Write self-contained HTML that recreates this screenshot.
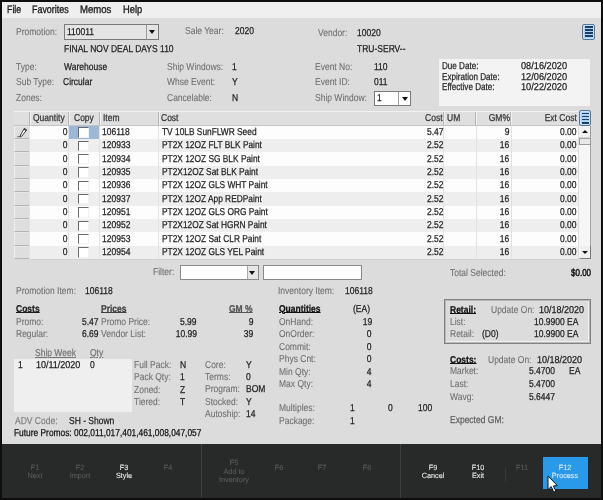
<!DOCTYPE html>
<html><head><meta charset="utf-8"><style>
html,body{margin:0;padding:0;width:603px;height:500px;overflow:hidden;background:#0e0e0e}
.b{position:absolute}
.t{position:absolute;font-family:"Liberation Sans",sans-serif;font-size:10px;line-height:10px;white-space:pre;text-rendering:geometricPrecision;-webkit-text-stroke-width:0.25px}
#tx{position:absolute;left:0;top:0;width:603px;height:500px;will-change:transform}
</style></head><body>
<div class="b" style="left:0px;top:0px;width:603px;height:500px;background:#0e0e0e"></div>
<div class="b" style="left:2px;top:2px;width:598.5px;height:495.8px;background:#dcdcdc"></div>
<div class="b" style="left:2px;top:2px;width:598.5px;height:15.5px;background:#efefef"></div>
<div class="b" style="left:582px;top:24px;width:13px;height:16px;background:#acd3f6;border:1px solid #56779c;border-radius:2px;box-sizing:border-box;box-shadow:inset 0 0 0 1px #c6e2fb"></div>
<div class="b" style="left:584.5px;top:26.150000000000002px;width:8.0px;height:1.7999999999999972px;background:#1d3f66"></div>
<div class="b" style="left:584.5px;top:29.25px;width:8.0px;height:1.7999999999999972px;background:#1d3f66"></div>
<div class="b" style="left:584.5px;top:32.35px;width:8.0px;height:1.7999999999999972px;background:#1d3f66"></div>
<div class="b" style="left:584.5px;top:35.45px;width:8.0px;height:1.7999999999999972px;background:#1d3f66"></div>
<div class="b" style="left:64px;top:24px;width:95px;height:15.5px;border:1px solid #7a7a7a;background:#e4e4e4;box-sizing:border-box"></div>
<div class="b" style="left:145.5px;top:25px;width:1.0px;height:13.5px;background:#9a9a9a"></div>
<div class="b" style="left:149px;top:30px;width:0;height:0;border-left:3.5px solid transparent;border-right:3.5px solid transparent;border-top:4px solid #111"></div>
<div class="b" style="left:373.7px;top:90.6px;width:37.80000000000001px;height:15.400000000000006px;border:1px solid #7a7a7a;background:#fff;box-sizing:border-box"></div>
<div class="b" style="left:398px;top:91.6px;width:1px;height:13.400000000000006px;background:#a0a0a0"></div>
<div class="b" style="left:401.5px;top:97px;width:0;height:0;border-left:3.5px solid transparent;border-right:3.5px solid transparent;border-top:4px solid #111"></div>
<div class="b" style="left:438.5px;top:58.6px;width:151.5px;height:46.99999999999999px;background:#f3f3f3"></div>
<div class="b" style="left:14px;top:110.7px;width:564.5px;height:15.0px;background:#dfdfdf;border-top:1px solid #f2f2f2;box-sizing:border-box"></div>
<div class="b" style="left:28.7px;top:111.7px;width:1.0px;height:14.0px;background:#b4b4b4"></div>
<div class="b" style="left:29.7px;top:111.7px;width:1.0px;height:14.0px;background:#f2f2f2"></div>
<div class="b" style="left:67.7px;top:111.7px;width:1.0px;height:14.0px;background:#b4b4b4"></div>
<div class="b" style="left:68.7px;top:111.7px;width:1.0px;height:14.0px;background:#f2f2f2"></div>
<div class="b" style="left:98.5px;top:111.7px;width:1.0px;height:14.0px;background:#b4b4b4"></div>
<div class="b" style="left:99.5px;top:111.7px;width:1.0px;height:14.0px;background:#f2f2f2"></div>
<div class="b" style="left:157.7px;top:111.7px;width:1.0px;height:14.0px;background:#b4b4b4"></div>
<div class="b" style="left:158.7px;top:111.7px;width:1.0px;height:14.0px;background:#f2f2f2"></div>
<div class="b" style="left:442.7px;top:111.7px;width:1.0px;height:14.0px;background:#b4b4b4"></div>
<div class="b" style="left:443.7px;top:111.7px;width:1.0px;height:14.0px;background:#f2f2f2"></div>
<div class="b" style="left:475.2px;top:111.7px;width:1.0px;height:14.0px;background:#b4b4b4"></div>
<div class="b" style="left:476.2px;top:111.7px;width:1.0px;height:14.0px;background:#f2f2f2"></div>
<div class="b" style="left:510px;top:111.7px;width:1px;height:14.0px;background:#b4b4b4"></div>
<div class="b" style="left:511px;top:111.7px;width:1px;height:14.0px;background:#f2f2f2"></div>
<div class="b" style="left:14px;top:124.7px;width:564.5px;height:1.0px;background:#c4c4c4"></div>
<div class="b" style="left:579px;top:110px;width:12px;height:16px;background:#acd3f6;border:1px solid #56779c;border-radius:2px;box-sizing:border-box;box-shadow:inset 0 0 0 1px #c6e2fb"></div>
<div class="b" style="left:581.5px;top:112.55px;width:7.0px;height:1.8000000000000114px;background:#1d3f66"></div>
<div class="b" style="left:581.5px;top:115.55px;width:7.0px;height:1.8000000000000114px;background:#1d3f66"></div>
<div class="b" style="left:581.5px;top:118.64999999999999px;width:7.0px;height:1.8000000000000114px;background:#1d3f66"></div>
<div class="b" style="left:581.5px;top:121.75px;width:7.0px;height:1.8000000000000114px;background:#1d3f66"></div>
<div class="b" style="left:29.7px;top:125.7px;width:548.8px;height:13.329999999999998px;background:#fdfdfd"></div>
<div class="b" style="left:14px;top:125.7px;width:15.7px;height:13.329999999999998px;background:#dedede;border-left:1px solid #f0f0f0;border-top:1px solid #e8e8e8;border-right:1px solid #bcbcbc;border-bottom:1px solid #b4b4b4;box-sizing:border-box"></div>
<div class="b" style="left:29.2px;top:125.7px;width:1.0px;height:13.329999999999998px;background:#e2e2e2"></div>
<div class="b" style="left:68.2px;top:125.7px;width:1.0px;height:13.329999999999998px;background:#e2e2e2"></div>
<div class="b" style="left:99.0px;top:125.7px;width:1.0px;height:13.329999999999998px;background:#e2e2e2"></div>
<div class="b" style="left:158.2px;top:125.7px;width:1.0px;height:13.329999999999998px;background:#e2e2e2"></div>
<div class="b" style="left:443.2px;top:125.7px;width:1.0px;height:13.329999999999998px;background:#e2e2e2"></div>
<div class="b" style="left:475.7px;top:125.7px;width:1.0px;height:13.329999999999998px;background:#e2e2e2"></div>
<div class="b" style="left:510.5px;top:125.7px;width:1.0px;height:13.329999999999998px;background:#e2e2e2"></div>
<div class="b" style="left:69.2px;top:125.7px;width:29.799999999999997px;height:12.829999999999998px;background:#9db7d6"></div>
<div class="b" style="left:78.2px;top:127.2px;width:11.0px;height:10.499999999999986px;background:#fff;border-left:1.5px solid #6a6a6a;border-top:1.5px solid #6a6a6a;border-right:1px solid #f2f2f2;border-bottom:1px solid #f2f2f2;box-sizing:border-box"></div>
<div class="b" style="left:29.7px;top:139.03px;width:548.8px;height:13.330000000000013px;background:#eeeeee"></div>
<div class="b" style="left:14px;top:139.03px;width:15.7px;height:13.330000000000013px;background:#dedede;border-left:1px solid #f0f0f0;border-top:1px solid #e8e8e8;border-right:1px solid #bcbcbc;border-bottom:1px solid #b4b4b4;box-sizing:border-box"></div>
<div class="b" style="left:29.2px;top:139.03px;width:1.0px;height:13.330000000000013px;background:#e2e2e2"></div>
<div class="b" style="left:68.2px;top:139.03px;width:1.0px;height:13.330000000000013px;background:#e2e2e2"></div>
<div class="b" style="left:99.0px;top:139.03px;width:1.0px;height:13.330000000000013px;background:#e2e2e2"></div>
<div class="b" style="left:158.2px;top:139.03px;width:1.0px;height:13.330000000000013px;background:#e2e2e2"></div>
<div class="b" style="left:443.2px;top:139.03px;width:1.0px;height:13.330000000000013px;background:#e2e2e2"></div>
<div class="b" style="left:475.7px;top:139.03px;width:1.0px;height:13.330000000000013px;background:#e2e2e2"></div>
<div class="b" style="left:510.5px;top:139.03px;width:1.0px;height:13.330000000000013px;background:#e2e2e2"></div>
<div class="b" style="left:78.2px;top:140.53px;width:11.0px;height:10.5px;background:#fff;border-left:1.5px solid #6a6a6a;border-top:1.5px solid #6a6a6a;border-right:1px solid #f2f2f2;border-bottom:1px solid #f2f2f2;box-sizing:border-box"></div>
<div class="b" style="left:29.7px;top:152.36px;width:548.8px;height:13.330000000000013px;background:#fdfdfd"></div>
<div class="b" style="left:14px;top:152.36px;width:15.7px;height:13.330000000000013px;background:#dedede;border-left:1px solid #f0f0f0;border-top:1px solid #e8e8e8;border-right:1px solid #bcbcbc;border-bottom:1px solid #b4b4b4;box-sizing:border-box"></div>
<div class="b" style="left:29.2px;top:152.36px;width:1.0px;height:13.330000000000013px;background:#e2e2e2"></div>
<div class="b" style="left:68.2px;top:152.36px;width:1.0px;height:13.330000000000013px;background:#e2e2e2"></div>
<div class="b" style="left:99.0px;top:152.36px;width:1.0px;height:13.330000000000013px;background:#e2e2e2"></div>
<div class="b" style="left:158.2px;top:152.36px;width:1.0px;height:13.330000000000013px;background:#e2e2e2"></div>
<div class="b" style="left:443.2px;top:152.36px;width:1.0px;height:13.330000000000013px;background:#e2e2e2"></div>
<div class="b" style="left:475.7px;top:152.36px;width:1.0px;height:13.330000000000013px;background:#e2e2e2"></div>
<div class="b" style="left:510.5px;top:152.36px;width:1.0px;height:13.330000000000013px;background:#e2e2e2"></div>
<div class="b" style="left:78.2px;top:153.86px;width:11.0px;height:10.5px;background:#fff;border-left:1.5px solid #6a6a6a;border-top:1.5px solid #6a6a6a;border-right:1px solid #f2f2f2;border-bottom:1px solid #f2f2f2;box-sizing:border-box"></div>
<div class="b" style="left:29.7px;top:165.69px;width:548.8px;height:13.330000000000013px;background:#eeeeee"></div>
<div class="b" style="left:14px;top:165.69px;width:15.7px;height:13.330000000000013px;background:#dedede;border-left:1px solid #f0f0f0;border-top:1px solid #e8e8e8;border-right:1px solid #bcbcbc;border-bottom:1px solid #b4b4b4;box-sizing:border-box"></div>
<div class="b" style="left:29.2px;top:165.69px;width:1.0px;height:13.330000000000013px;background:#e2e2e2"></div>
<div class="b" style="left:68.2px;top:165.69px;width:1.0px;height:13.330000000000013px;background:#e2e2e2"></div>
<div class="b" style="left:99.0px;top:165.69px;width:1.0px;height:13.330000000000013px;background:#e2e2e2"></div>
<div class="b" style="left:158.2px;top:165.69px;width:1.0px;height:13.330000000000013px;background:#e2e2e2"></div>
<div class="b" style="left:443.2px;top:165.69px;width:1.0px;height:13.330000000000013px;background:#e2e2e2"></div>
<div class="b" style="left:475.7px;top:165.69px;width:1.0px;height:13.330000000000013px;background:#e2e2e2"></div>
<div class="b" style="left:510.5px;top:165.69px;width:1.0px;height:13.330000000000013px;background:#e2e2e2"></div>
<div class="b" style="left:78.2px;top:167.19px;width:11.0px;height:10.5px;background:#fff;border-left:1.5px solid #6a6a6a;border-top:1.5px solid #6a6a6a;border-right:1px solid #f2f2f2;border-bottom:1px solid #f2f2f2;box-sizing:border-box"></div>
<div class="b" style="left:29.7px;top:179.02px;width:548.8px;height:13.330000000000013px;background:#fdfdfd"></div>
<div class="b" style="left:14px;top:179.02px;width:15.7px;height:13.330000000000013px;background:#dedede;border-left:1px solid #f0f0f0;border-top:1px solid #e8e8e8;border-right:1px solid #bcbcbc;border-bottom:1px solid #b4b4b4;box-sizing:border-box"></div>
<div class="b" style="left:29.2px;top:179.02px;width:1.0px;height:13.330000000000013px;background:#e2e2e2"></div>
<div class="b" style="left:68.2px;top:179.02px;width:1.0px;height:13.330000000000013px;background:#e2e2e2"></div>
<div class="b" style="left:99.0px;top:179.02px;width:1.0px;height:13.330000000000013px;background:#e2e2e2"></div>
<div class="b" style="left:158.2px;top:179.02px;width:1.0px;height:13.330000000000013px;background:#e2e2e2"></div>
<div class="b" style="left:443.2px;top:179.02px;width:1.0px;height:13.330000000000013px;background:#e2e2e2"></div>
<div class="b" style="left:475.7px;top:179.02px;width:1.0px;height:13.330000000000013px;background:#e2e2e2"></div>
<div class="b" style="left:510.5px;top:179.02px;width:1.0px;height:13.330000000000013px;background:#e2e2e2"></div>
<div class="b" style="left:78.2px;top:180.52px;width:11.0px;height:10.5px;background:#fff;border-left:1.5px solid #6a6a6a;border-top:1.5px solid #6a6a6a;border-right:1px solid #f2f2f2;border-bottom:1px solid #f2f2f2;box-sizing:border-box"></div>
<div class="b" style="left:29.7px;top:192.35000000000002px;width:548.8px;height:13.330000000000013px;background:#eeeeee"></div>
<div class="b" style="left:14px;top:192.35000000000002px;width:15.7px;height:13.330000000000013px;background:#dedede;border-left:1px solid #f0f0f0;border-top:1px solid #e8e8e8;border-right:1px solid #bcbcbc;border-bottom:1px solid #b4b4b4;box-sizing:border-box"></div>
<div class="b" style="left:29.2px;top:192.35000000000002px;width:1.0px;height:13.330000000000013px;background:#e2e2e2"></div>
<div class="b" style="left:68.2px;top:192.35000000000002px;width:1.0px;height:13.330000000000013px;background:#e2e2e2"></div>
<div class="b" style="left:99.0px;top:192.35000000000002px;width:1.0px;height:13.330000000000013px;background:#e2e2e2"></div>
<div class="b" style="left:158.2px;top:192.35000000000002px;width:1.0px;height:13.330000000000013px;background:#e2e2e2"></div>
<div class="b" style="left:443.2px;top:192.35000000000002px;width:1.0px;height:13.330000000000013px;background:#e2e2e2"></div>
<div class="b" style="left:475.7px;top:192.35000000000002px;width:1.0px;height:13.330000000000013px;background:#e2e2e2"></div>
<div class="b" style="left:510.5px;top:192.35000000000002px;width:1.0px;height:13.330000000000013px;background:#e2e2e2"></div>
<div class="b" style="left:78.2px;top:193.85000000000002px;width:11.0px;height:10.5px;background:#fff;border-left:1.5px solid #6a6a6a;border-top:1.5px solid #6a6a6a;border-right:1px solid #f2f2f2;border-bottom:1px solid #f2f2f2;box-sizing:border-box"></div>
<div class="b" style="left:29.7px;top:205.68px;width:548.8px;height:13.330000000000013px;background:#fdfdfd"></div>
<div class="b" style="left:14px;top:205.68px;width:15.7px;height:13.330000000000013px;background:#dedede;border-left:1px solid #f0f0f0;border-top:1px solid #e8e8e8;border-right:1px solid #bcbcbc;border-bottom:1px solid #b4b4b4;box-sizing:border-box"></div>
<div class="b" style="left:29.2px;top:205.68px;width:1.0px;height:13.330000000000013px;background:#e2e2e2"></div>
<div class="b" style="left:68.2px;top:205.68px;width:1.0px;height:13.330000000000013px;background:#e2e2e2"></div>
<div class="b" style="left:99.0px;top:205.68px;width:1.0px;height:13.330000000000013px;background:#e2e2e2"></div>
<div class="b" style="left:158.2px;top:205.68px;width:1.0px;height:13.330000000000013px;background:#e2e2e2"></div>
<div class="b" style="left:443.2px;top:205.68px;width:1.0px;height:13.330000000000013px;background:#e2e2e2"></div>
<div class="b" style="left:475.7px;top:205.68px;width:1.0px;height:13.330000000000013px;background:#e2e2e2"></div>
<div class="b" style="left:510.5px;top:205.68px;width:1.0px;height:13.330000000000013px;background:#e2e2e2"></div>
<div class="b" style="left:78.2px;top:207.18px;width:11.0px;height:10.5px;background:#fff;border-left:1.5px solid #6a6a6a;border-top:1.5px solid #6a6a6a;border-right:1px solid #f2f2f2;border-bottom:1px solid #f2f2f2;box-sizing:border-box"></div>
<div class="b" style="left:29.7px;top:219.01px;width:548.8px;height:13.330000000000013px;background:#eeeeee"></div>
<div class="b" style="left:14px;top:219.01px;width:15.7px;height:13.330000000000013px;background:#dedede;border-left:1px solid #f0f0f0;border-top:1px solid #e8e8e8;border-right:1px solid #bcbcbc;border-bottom:1px solid #b4b4b4;box-sizing:border-box"></div>
<div class="b" style="left:29.2px;top:219.01px;width:1.0px;height:13.330000000000013px;background:#e2e2e2"></div>
<div class="b" style="left:68.2px;top:219.01px;width:1.0px;height:13.330000000000013px;background:#e2e2e2"></div>
<div class="b" style="left:99.0px;top:219.01px;width:1.0px;height:13.330000000000013px;background:#e2e2e2"></div>
<div class="b" style="left:158.2px;top:219.01px;width:1.0px;height:13.330000000000013px;background:#e2e2e2"></div>
<div class="b" style="left:443.2px;top:219.01px;width:1.0px;height:13.330000000000013px;background:#e2e2e2"></div>
<div class="b" style="left:475.7px;top:219.01px;width:1.0px;height:13.330000000000013px;background:#e2e2e2"></div>
<div class="b" style="left:510.5px;top:219.01px;width:1.0px;height:13.330000000000013px;background:#e2e2e2"></div>
<div class="b" style="left:78.2px;top:220.51px;width:11.0px;height:10.5px;background:#fff;border-left:1.5px solid #6a6a6a;border-top:1.5px solid #6a6a6a;border-right:1px solid #f2f2f2;border-bottom:1px solid #f2f2f2;box-sizing:border-box"></div>
<div class="b" style="left:29.7px;top:232.34px;width:548.8px;height:13.330000000000013px;background:#fdfdfd"></div>
<div class="b" style="left:14px;top:232.34px;width:15.7px;height:13.330000000000013px;background:#dedede;border-left:1px solid #f0f0f0;border-top:1px solid #e8e8e8;border-right:1px solid #bcbcbc;border-bottom:1px solid #b4b4b4;box-sizing:border-box"></div>
<div class="b" style="left:29.2px;top:232.34px;width:1.0px;height:13.330000000000013px;background:#e2e2e2"></div>
<div class="b" style="left:68.2px;top:232.34px;width:1.0px;height:13.330000000000013px;background:#e2e2e2"></div>
<div class="b" style="left:99.0px;top:232.34px;width:1.0px;height:13.330000000000013px;background:#e2e2e2"></div>
<div class="b" style="left:158.2px;top:232.34px;width:1.0px;height:13.330000000000013px;background:#e2e2e2"></div>
<div class="b" style="left:443.2px;top:232.34px;width:1.0px;height:13.330000000000013px;background:#e2e2e2"></div>
<div class="b" style="left:475.7px;top:232.34px;width:1.0px;height:13.330000000000013px;background:#e2e2e2"></div>
<div class="b" style="left:510.5px;top:232.34px;width:1.0px;height:13.330000000000013px;background:#e2e2e2"></div>
<div class="b" style="left:78.2px;top:233.84px;width:11.0px;height:10.5px;background:#fff;border-left:1.5px solid #6a6a6a;border-top:1.5px solid #6a6a6a;border-right:1px solid #f2f2f2;border-bottom:1px solid #f2f2f2;box-sizing:border-box"></div>
<div class="b" style="left:29.7px;top:245.67000000000002px;width:548.8px;height:13.329999999999984px;background:#eeeeee"></div>
<div class="b" style="left:14px;top:245.67000000000002px;width:15.7px;height:13.329999999999984px;background:#dedede;border-left:1px solid #f0f0f0;border-top:1px solid #e8e8e8;border-right:1px solid #bcbcbc;border-bottom:1px solid #b4b4b4;box-sizing:border-box"></div>
<div class="b" style="left:29.2px;top:245.67000000000002px;width:1.0px;height:13.329999999999984px;background:#e2e2e2"></div>
<div class="b" style="left:68.2px;top:245.67000000000002px;width:1.0px;height:13.329999999999984px;background:#e2e2e2"></div>
<div class="b" style="left:99.0px;top:245.67000000000002px;width:1.0px;height:13.329999999999984px;background:#e2e2e2"></div>
<div class="b" style="left:158.2px;top:245.67000000000002px;width:1.0px;height:13.329999999999984px;background:#e2e2e2"></div>
<div class="b" style="left:443.2px;top:245.67000000000002px;width:1.0px;height:13.329999999999984px;background:#e2e2e2"></div>
<div class="b" style="left:475.7px;top:245.67000000000002px;width:1.0px;height:13.329999999999984px;background:#e2e2e2"></div>
<div class="b" style="left:510.5px;top:245.67000000000002px;width:1.0px;height:13.329999999999984px;background:#e2e2e2"></div>
<div class="b" style="left:78.2px;top:247.17000000000002px;width:11.0px;height:10.5px;background:#fff;border-left:1.5px solid #6a6a6a;border-top:1.5px solid #6a6a6a;border-right:1px solid #f2f2f2;border-bottom:1px solid #f2f2f2;box-sizing:border-box"></div>
<div class="b" style="left:29.7px;top:258.5px;width:548.8px;height:1.0px;background:#d0d0d0"></div>
<svg class="b" style="left:14px;top:125px" width="16" height="14" viewBox="0 0 16 14"><path d="M10.3 3.4 L12.7 5.0 L7.8 11.2 L6.3 11.8 L6.5 10.0 Z" fill="#f4f4f4" stroke="#2a2a2a" stroke-width="0.9" stroke-linejoin="round"/><path d="M10.3 3.4 L12.7 5.0 L11.9 6.0 L9.5 4.4Z" fill="#3a3a3a"/><path d="M3.3 11.7 L6.5 11.7" stroke="#555" stroke-width="0.9"/></svg>
<div class="b" style="left:578.5px;top:125.7px;width:12.5px;height:133.3px;background:#f6f6f6;border-right:1px solid #a4a4a4;box-sizing:border-box"></div>
<div class="b" style="left:578.5px;top:125.7px;width:12.5px;height:12.700000000000003px;background:#f2f2f2;border-right:1px solid #9a9a9a;border-bottom:1px solid #d0d0d0;box-sizing:border-box"></div>
<div class="b" style="left:581.8px;top:130px;width:0;height:0;border-left:3.5px solid transparent;border-right:3.5px solid transparent;border-bottom:3.5px solid #111"></div>
<div class="b" style="left:578.5px;top:138.4px;width:12.5px;height:7.099999999999994px;background:#e8e8e8;border:1px solid #9a9a9a;border-top:1px solid #a8a8a8;box-sizing:border-box"></div>
<div class="b" style="left:578.5px;top:245.7px;width:12.799999999999955px;height:13.5px;background:#f0f0f0;border-left:1px solid #fafafa;border-right:1.5px solid #7a7a7a;border-bottom:1.5px solid #7a7a7a;box-sizing:border-box"></div>
<div class="b" style="left:581.8px;top:251px;width:0;height:0;border-left:3.5px solid transparent;border-right:3.5px solid transparent;border-top:3.5px solid #111"></div>
<div class="b" style="left:180px;top:264.5px;width:79px;height:15.5px;border:1px solid #8a8a8a;background:#fff;box-sizing:border-box"></div>
<div class="b" style="left:247px;top:265.5px;width:11px;height:13.5px;background:#e6e6e6;border-left:1px solid #a8a8a8;box-sizing:border-box"></div>
<div class="b" style="left:249px;top:270.5px;width:0;height:0;border-left:3.5px solid transparent;border-right:3.5px solid transparent;border-top:4px solid #111"></div>
<div class="b" style="left:263.2px;top:264.5px;width:98.80000000000001px;height:15.5px;border:1px solid #8a8a8a;background:#fff;box-sizing:border-box"></div>
<div class="b" style="left:444px;top:299.3px;width:147px;height:45.0px;border:1px solid #828282;box-shadow:inset 0 0 0 1px #b8b8b8, inset -2px -2px 0 #f0f0f0;box-sizing:border-box"></div>
<div class="b" style="left:14.4px;top:358.9px;width:117.4px;height:53.5px;background:#efefef"></div>
<div class="b" style="left:2px;top:444px;width:598.5px;height:53.80000000000001px;background:#282a29"></div>
<div class="b" style="left:200.5px;top:444px;width:1.0px;height:53.80000000000001px;background:#3e403f"></div>
<div class="b" style="left:399.5px;top:444px;width:1.0px;height:53.80000000000001px;background:#3e403f"></div>
<div class="b" style="left:542.7px;top:456.5px;width:45.5px;height:32.0px;background:#299aea"></div>
<div class="b" style="left:505px;top:468px;width:1px;height:13px;background:#3a3c3b"></div>
<div id="tx">
<div class="t" style="top:5.00px;color:#1c1c1c;font-size:11px;left:6.70px;transform:scaleX(0.8);transform-origin:0 0;-webkit-text-stroke-width:0.35px;">File</div>
<div class="t" style="top:5.00px;color:#1c1c1c;font-size:11px;left:32.00px;transform:scaleX(0.81);transform-origin:0 0;-webkit-text-stroke-width:0.35px;">Favorites</div>
<div class="t" style="top:5.00px;color:#1c1c1c;font-size:11px;left:79.70px;transform:scaleX(0.87);transform-origin:0 0;-webkit-text-stroke-width:0.35px;">Memos</div>
<div class="t" style="top:5.00px;color:#1c1c1c;font-size:11px;left:122.70px;transform:scaleX(0.85);transform-origin:0 0;-webkit-text-stroke-width:0.35px;">Help</div>
<div class="t" style="top:28.00px;color:#707070;left:15.70px;transform:scaleX(0.85);transform-origin:0 0;-webkit-text-stroke-width:0.1px;">Promotion:</div>
<div class="t" style="top:28.00px;color:#222;left:66.70px;transform:scaleX(0.85);transform-origin:0 0;">110011</div>
<div class="t" style="top:45.00px;color:#222;left:64.20px;transform:scaleX(0.85);transform-origin:0 0;">FINAL NOV DEAL DAYS 110</div>
<div class="t" style="top:63.00px;color:#707070;left:15.70px;transform:scaleX(0.85);transform-origin:0 0;-webkit-text-stroke-width:0.1px;">Type:</div>
<div class="t" style="top:63.00px;color:#222;left:63.70px;transform:scaleX(0.85);transform-origin:0 0;">Warehouse</div>
<div class="t" style="top:78.00px;color:#707070;left:15.70px;transform:scaleX(0.85);transform-origin:0 0;-webkit-text-stroke-width:0.1px;">Sub Type:</div>
<div class="t" style="top:78.00px;color:#222;left:63.20px;transform:scaleX(0.85);transform-origin:0 0;">Circular</div>
<div class="t" style="top:94.00px;color:#707070;left:15.70px;transform:scaleX(0.85);transform-origin:0 0;-webkit-text-stroke-width:0.1px;">Zones:</div>
<div class="t" style="top:27.00px;color:#707070;left:185.00px;transform:scaleX(0.85);transform-origin:0 0;-webkit-text-stroke-width:0.1px;">Sale Year:</div>
<div class="t" style="top:27.00px;color:#222;left:235.30px;transform:scaleX(0.85);transform-origin:0 0;">2020</div>
<div class="t" style="top:63.00px;color:#707070;left:167.10px;transform:scaleX(0.85);transform-origin:0 0;-webkit-text-stroke-width:0.1px;">Ship Windows:</div>
<div class="t" style="top:63.00px;color:#222;left:232.30px;transform:scaleX(0.85);transform-origin:0 0;">1</div>
<div class="t" style="top:78.00px;color:#707070;left:167.10px;transform:scaleX(0.85);transform-origin:0 0;-webkit-text-stroke-width:0.1px;">Whse Event:</div>
<div class="t" style="top:78.00px;color:#222;left:231.90px;transform:scaleX(0.85);transform-origin:0 0;">Y</div>
<div class="t" style="top:94.00px;color:#707070;left:167.10px;transform:scaleX(0.85);transform-origin:0 0;-webkit-text-stroke-width:0.1px;">Cancelable:</div>
<div class="t" style="top:94.00px;color:#222;left:232.30px;transform:scaleX(0.85);transform-origin:0 0;">N</div>
<div class="t" style="top:29.00px;color:#707070;left:317.60px;transform:scaleX(0.85);transform-origin:0 0;-webkit-text-stroke-width:0.1px;">Vendor:</div>
<div class="t" style="top:29.00px;color:#222;left:357.40px;transform:scaleX(0.85);transform-origin:0 0;">10020</div>
<div class="t" style="top:45.00px;color:#222;left:357.40px;transform:scaleX(0.85);transform-origin:0 0;">TRU-SERV--</div>
<div class="t" style="top:63.00px;color:#707070;left:315.00px;transform:scaleX(0.85);transform-origin:0 0;-webkit-text-stroke-width:0.1px;">Event No:</div>
<div class="t" style="top:63.00px;color:#222;left:374.00px;transform:scaleX(0.85);transform-origin:0 0;">110</div>
<div class="t" style="top:78.00px;color:#707070;left:315.00px;transform:scaleX(0.85);transform-origin:0 0;-webkit-text-stroke-width:0.1px;">Event ID:</div>
<div class="t" style="top:78.00px;color:#222;left:374.00px;transform:scaleX(0.85);transform-origin:0 0;">011</div>
<div class="t" style="top:94.00px;color:#707070;left:315.00px;transform:scaleX(0.85);transform-origin:0 0;-webkit-text-stroke-width:0.1px;">Ship Window:</div>
<div class="t" style="top:94.00px;color:#222;left:376.70px;transform:scaleX(0.85);transform-origin:0 0;">1</div>
<div class="t" style="top:62.00px;color:#252525;left:441.50px;transform:scaleX(0.81);transform-origin:0 0;">Due Date:</div>
<div class="t" style="top:62.00px;color:#252525;left:521.30px;transform:scaleX(0.92);transform-origin:0 0;">08/16/2020</div>
<div class="t" style="top:73.00px;color:#252525;left:441.50px;transform:scaleX(0.81);transform-origin:0 0;">Expiration Date:</div>
<div class="t" style="top:73.00px;color:#252525;left:521.30px;transform:scaleX(0.92);transform-origin:0 0;">12/06/2020</div>
<div class="t" style="top:83.00px;color:#252525;left:441.50px;transform:scaleX(0.81);transform-origin:0 0;">Effective Date:</div>
<div class="t" style="top:83.00px;color:#252525;left:521.30px;transform:scaleX(0.92);transform-origin:0 0;">10/22/2020</div>
<div class="t" style="top:114.00px;color:#333;left:33.40px;transform:scaleX(0.85);transform-origin:0 0;">Quantity</div>
<div class="t" style="top:114.00px;color:#333;left:74.20px;transform:scaleX(0.85);transform-origin:0 0;">Copy</div>
<div class="t" style="top:114.00px;color:#333;left:102.50px;transform:scaleX(0.85);transform-origin:0 0;">Item</div>
<div class="t" style="top:114.00px;color:#333;left:161.30px;transform:scaleX(0.85);transform-origin:0 0;">Cost</div>
<div class="t" style="top:114.00px;color:#333;right:160.20px;transform:scaleX(0.85);transform-origin:100% 0;">Cost</div>
<div class="t" style="top:114.00px;color:#333;left:447.00px;transform:scaleX(0.85);transform-origin:0 0;">UM</div>
<div class="t" style="top:114.00px;color:#333;right:93.30px;transform:scaleX(0.85);transform-origin:100% 0;">GM%</div>
<div class="t" style="top:114.00px;color:#333;right:26.70px;transform:scaleX(0.85);transform-origin:100% 0;">Ext Cost</div>
<div class="t" style="top:128.00px;color:#222;right:535.10px;transform:scaleX(0.85);transform-origin:100% 0;">0</div>
<div class="t" style="top:128.00px;color:#222;left:102.00px;transform:scaleX(0.85);transform-origin:0 0;">106118</div>
<div class="t" style="top:128.00px;color:#222;left:161.70px;transform:scaleX(0.835);transform-origin:0 0;">TV 10LB SunFLWR Seed</div>
<div class="t" style="top:128.00px;color:#222;right:159.90px;transform:scaleX(0.85);transform-origin:100% 0;">5.47</div>
<div class="t" style="top:128.00px;color:#222;right:93.40px;transform:scaleX(0.85);transform-origin:100% 0;">9</div>
<div class="t" style="top:128.00px;color:#222;right:26.40px;transform:scaleX(0.85);transform-origin:100% 0;">0.00</div>
<div class="t" style="top:141.00px;color:#222;right:535.10px;transform:scaleX(0.85);transform-origin:100% 0;">0</div>
<div class="t" style="top:141.00px;color:#222;left:102.00px;transform:scaleX(0.85);transform-origin:0 0;">120933</div>
<div class="t" style="top:141.00px;color:#222;left:161.70px;transform:scaleX(0.835);transform-origin:0 0;">PT2X 12OZ FLT BLK Paint</div>
<div class="t" style="top:141.00px;color:#222;right:159.90px;transform:scaleX(0.85);transform-origin:100% 0;">2.52</div>
<div class="t" style="top:141.00px;color:#222;right:93.40px;transform:scaleX(0.85);transform-origin:100% 0;">16</div>
<div class="t" style="top:141.00px;color:#222;right:26.40px;transform:scaleX(0.85);transform-origin:100% 0;">0.00</div>
<div class="t" style="top:155.00px;color:#222;right:535.10px;transform:scaleX(0.85);transform-origin:100% 0;">0</div>
<div class="t" style="top:155.00px;color:#222;left:102.00px;transform:scaleX(0.85);transform-origin:0 0;">120934</div>
<div class="t" style="top:155.00px;color:#222;left:161.70px;transform:scaleX(0.835);transform-origin:0 0;">PT2X 12OZ SG BLK Paint</div>
<div class="t" style="top:155.00px;color:#222;right:159.90px;transform:scaleX(0.85);transform-origin:100% 0;">2.52</div>
<div class="t" style="top:155.00px;color:#222;right:93.40px;transform:scaleX(0.85);transform-origin:100% 0;">16</div>
<div class="t" style="top:155.00px;color:#222;right:26.40px;transform:scaleX(0.85);transform-origin:100% 0;">0.00</div>
<div class="t" style="top:168.00px;color:#222;right:535.10px;transform:scaleX(0.85);transform-origin:100% 0;">0</div>
<div class="t" style="top:168.00px;color:#222;left:102.00px;transform:scaleX(0.85);transform-origin:0 0;">120935</div>
<div class="t" style="top:168.00px;color:#222;left:161.70px;transform:scaleX(0.835);transform-origin:0 0;">PT2X12OZ Sat BLK Paint</div>
<div class="t" style="top:168.00px;color:#222;right:159.90px;transform:scaleX(0.85);transform-origin:100% 0;">2.52</div>
<div class="t" style="top:168.00px;color:#222;right:93.40px;transform:scaleX(0.85);transform-origin:100% 0;">16</div>
<div class="t" style="top:168.00px;color:#222;right:26.40px;transform:scaleX(0.85);transform-origin:100% 0;">0.00</div>
<div class="t" style="top:181.00px;color:#222;right:535.10px;transform:scaleX(0.85);transform-origin:100% 0;">0</div>
<div class="t" style="top:181.00px;color:#222;left:102.00px;transform:scaleX(0.85);transform-origin:0 0;">120936</div>
<div class="t" style="top:181.00px;color:#222;left:161.70px;transform:scaleX(0.835);transform-origin:0 0;">PT2X 12OZ GLS WHT Paint</div>
<div class="t" style="top:181.00px;color:#222;right:159.90px;transform:scaleX(0.85);transform-origin:100% 0;">2.52</div>
<div class="t" style="top:181.00px;color:#222;right:93.40px;transform:scaleX(0.85);transform-origin:100% 0;">16</div>
<div class="t" style="top:181.00px;color:#222;right:26.40px;transform:scaleX(0.85);transform-origin:100% 0;">0.00</div>
<div class="t" style="top:195.00px;color:#222;right:535.10px;transform:scaleX(0.85);transform-origin:100% 0;">0</div>
<div class="t" style="top:195.00px;color:#222;left:102.00px;transform:scaleX(0.85);transform-origin:0 0;">120937</div>
<div class="t" style="top:195.00px;color:#222;left:161.70px;transform:scaleX(0.835);transform-origin:0 0;">PT2X 12OZ App REDPaint</div>
<div class="t" style="top:195.00px;color:#222;right:159.90px;transform:scaleX(0.85);transform-origin:100% 0;">2.52</div>
<div class="t" style="top:195.00px;color:#222;right:93.40px;transform:scaleX(0.85);transform-origin:100% 0;">16</div>
<div class="t" style="top:195.00px;color:#222;right:26.40px;transform:scaleX(0.85);transform-origin:100% 0;">0.00</div>
<div class="t" style="top:208.00px;color:#222;right:535.10px;transform:scaleX(0.85);transform-origin:100% 0;">0</div>
<div class="t" style="top:208.00px;color:#222;left:102.00px;transform:scaleX(0.85);transform-origin:0 0;">120951</div>
<div class="t" style="top:208.00px;color:#222;left:161.70px;transform:scaleX(0.835);transform-origin:0 0;">PT2X 12OZ GLS ORG Paint</div>
<div class="t" style="top:208.00px;color:#222;right:159.90px;transform:scaleX(0.85);transform-origin:100% 0;">2.52</div>
<div class="t" style="top:208.00px;color:#222;right:93.40px;transform:scaleX(0.85);transform-origin:100% 0;">16</div>
<div class="t" style="top:208.00px;color:#222;right:26.40px;transform:scaleX(0.85);transform-origin:100% 0;">0.00</div>
<div class="t" style="top:221.00px;color:#222;right:535.10px;transform:scaleX(0.85);transform-origin:100% 0;">0</div>
<div class="t" style="top:221.00px;color:#222;left:102.00px;transform:scaleX(0.85);transform-origin:0 0;">120952</div>
<div class="t" style="top:221.00px;color:#222;left:161.70px;transform:scaleX(0.835);transform-origin:0 0;">PT2X12OZ Sat HGRN Paint</div>
<div class="t" style="top:221.00px;color:#222;right:159.90px;transform:scaleX(0.85);transform-origin:100% 0;">2.52</div>
<div class="t" style="top:221.00px;color:#222;right:93.40px;transform:scaleX(0.85);transform-origin:100% 0;">16</div>
<div class="t" style="top:221.00px;color:#222;right:26.40px;transform:scaleX(0.85);transform-origin:100% 0;">0.00</div>
<div class="t" style="top:235.00px;color:#222;right:535.10px;transform:scaleX(0.85);transform-origin:100% 0;">0</div>
<div class="t" style="top:235.00px;color:#222;left:102.00px;transform:scaleX(0.85);transform-origin:0 0;">120953</div>
<div class="t" style="top:235.00px;color:#222;left:161.70px;transform:scaleX(0.835);transform-origin:0 0;">PT2X 12OZ Sat CLR Paint</div>
<div class="t" style="top:235.00px;color:#222;right:159.90px;transform:scaleX(0.85);transform-origin:100% 0;">2.52</div>
<div class="t" style="top:235.00px;color:#222;right:93.40px;transform:scaleX(0.85);transform-origin:100% 0;">16</div>
<div class="t" style="top:235.00px;color:#222;right:26.40px;transform:scaleX(0.85);transform-origin:100% 0;">0.00</div>
<div class="t" style="top:248.00px;color:#222;right:535.10px;transform:scaleX(0.85);transform-origin:100% 0;">0</div>
<div class="t" style="top:248.00px;color:#222;left:102.00px;transform:scaleX(0.85);transform-origin:0 0;">120954</div>
<div class="t" style="top:248.00px;color:#222;left:161.70px;transform:scaleX(0.835);transform-origin:0 0;">PT2X 12OZ GLS YEL Paint</div>
<div class="t" style="top:248.00px;color:#222;right:159.90px;transform:scaleX(0.85);transform-origin:100% 0;">2.52</div>
<div class="t" style="top:248.00px;color:#222;right:93.40px;transform:scaleX(0.85);transform-origin:100% 0;">16</div>
<div class="t" style="top:248.00px;color:#222;right:26.40px;transform:scaleX(0.85);transform-origin:100% 0;">0.00</div>
<div class="t" style="top:268.00px;color:#707070;left:153.20px;transform:scaleX(0.85);transform-origin:0 0;-webkit-text-stroke-width:0.1px;">Filter:</div>
<div class="t" style="top:269.00px;color:#707070;left:449.70px;transform:scaleX(0.85);transform-origin:0 0;-webkit-text-stroke-width:0.1px;">Total Selected:</div>
<div class="t" style="top:269.00px;color:#1a1a1a;right:11.70px;transform:scaleX(0.8);transform-origin:100% 0;-webkit-text-stroke-width:0.55px;">$0.00</div>
<div class="t" style="top:287.00px;color:#707070;left:15.70px;transform:scaleX(0.85);transform-origin:0 0;-webkit-text-stroke-width:0.1px;">Promotion Item:</div>
<div class="t" style="top:287.00px;color:#222;left:84.90px;transform:scaleX(0.85);transform-origin:0 0;">106118</div>
<div class="t" style="top:287.00px;color:#707070;left:278.10px;transform:scaleX(0.85);transform-origin:0 0;-webkit-text-stroke-width:0.1px;">Inventory Item:</div>
<div class="t" style="top:287.00px;color:#222;left:344.90px;transform:scaleX(0.85);transform-origin:0 0;">106118</div>
<div class="t" style="top:305.00px;color:#1a1a1a;font-weight:bold;text-decoration:underline;text-underline-offset:0px;left:15.70px;transform:scaleX(0.85);transform-origin:0 0;">Costs</div>
<div class="t" style="top:305.00px;color:#404040;font-weight:bold;text-decoration:underline;text-underline-offset:0px;left:101.00px;transform:scaleX(0.85);transform-origin:0 0;">Prices</div>
<div class="t" style="top:305.00px;color:#555;font-weight:bold;text-decoration:underline;text-underline-offset:0px;left:229.20px;transform:scaleX(0.85);transform-origin:0 0;">GM %</div>
<div class="t" style="top:318.00px;color:#707070;left:15.70px;transform:scaleX(0.85);transform-origin:0 0;-webkit-text-stroke-width:0.1px;">Promo:</div>
<div class="t" style="top:318.00px;color:#222;right:504.80px;transform:scaleX(0.85);transform-origin:100% 0;">5.47</div>
<div class="t" style="top:330.00px;color:#707070;left:15.70px;transform:scaleX(0.85);transform-origin:0 0;-webkit-text-stroke-width:0.1px;">Regular:</div>
<div class="t" style="top:330.00px;color:#222;right:504.80px;transform:scaleX(0.85);transform-origin:100% 0;">6.69</div>
<div class="t" style="top:318.00px;color:#707070;left:101.00px;transform:scaleX(0.85);transform-origin:0 0;-webkit-text-stroke-width:0.1px;">Promo Price:</div>
<div class="t" style="top:318.00px;color:#222;right:406.40px;transform:scaleX(0.85);transform-origin:100% 0;">5.99</div>
<div class="t" style="top:318.00px;color:#222;right:349.60px;transform:scaleX(0.85);transform-origin:100% 0;">9</div>
<div class="t" style="top:330.00px;color:#707070;left:101.00px;transform:scaleX(0.85);transform-origin:0 0;-webkit-text-stroke-width:0.1px;">Vendor List:</div>
<div class="t" style="top:330.00px;color:#222;right:406.40px;transform:scaleX(0.85);transform-origin:100% 0;">10.99</div>
<div class="t" style="top:330.00px;color:#222;right:349.60px;transform:scaleX(0.85);transform-origin:100% 0;">39</div>
<div class="t" style="top:305.00px;color:#111;font-weight:bold;text-decoration:underline;text-underline-offset:0px;left:278.70px;transform:scaleX(0.85);transform-origin:0 0;">Quantities</div>
<div class="t" style="top:305.00px;color:#222;left:352.90px;transform:scaleX(0.85);transform-origin:0 0;">(EA)</div>
<div class="t" style="top:318.00px;color:#707070;left:278.70px;transform:scaleX(0.85);transform-origin:0 0;-webkit-text-stroke-width:0.1px;">OnHand:</div>
<div class="t" style="top:318.00px;color:#222;right:231.10px;transform:scaleX(0.85);transform-origin:100% 0;">19</div>
<div class="t" style="top:330.00px;color:#707070;left:278.70px;transform:scaleX(0.85);transform-origin:0 0;-webkit-text-stroke-width:0.1px;">OnOrder:</div>
<div class="t" style="top:330.00px;color:#222;right:231.10px;transform:scaleX(0.85);transform-origin:100% 0;">0</div>
<div class="t" style="top:343.00px;color:#707070;left:278.70px;transform:scaleX(0.85);transform-origin:0 0;-webkit-text-stroke-width:0.1px;">Commit:</div>
<div class="t" style="top:343.00px;color:#222;right:231.10px;transform:scaleX(0.85);transform-origin:100% 0;">0</div>
<div class="t" style="top:355.00px;color:#707070;left:278.70px;transform:scaleX(0.85);transform-origin:0 0;-webkit-text-stroke-width:0.1px;">Phys Cnt:</div>
<div class="t" style="top:355.00px;color:#222;right:231.10px;transform:scaleX(0.85);transform-origin:100% 0;">0</div>
<div class="t" style="top:368.00px;color:#707070;left:278.70px;transform:scaleX(0.85);transform-origin:0 0;-webkit-text-stroke-width:0.1px;">Min Qty:</div>
<div class="t" style="top:368.00px;color:#222;right:231.10px;transform:scaleX(0.85);transform-origin:100% 0;">4</div>
<div class="t" style="top:380.00px;color:#707070;left:278.70px;transform:scaleX(0.85);transform-origin:0 0;-webkit-text-stroke-width:0.1px;">Max Qty:</div>
<div class="t" style="top:380.00px;color:#222;right:231.10px;transform:scaleX(0.85);transform-origin:100% 0;">4</div>
<div class="t" style="top:404.00px;color:#707070;left:278.70px;transform:scaleX(0.85);transform-origin:0 0;-webkit-text-stroke-width:0.1px;">Multiples:</div>
<div class="t" style="top:404.00px;color:#222;left:350.00px;transform:scaleX(0.85);transform-origin:0 0;">1</div>
<div class="t" style="top:404.00px;color:#222;left:388.10px;transform:scaleX(0.85);transform-origin:0 0;">0</div>
<div class="t" style="top:404.00px;color:#222;left:417.70px;transform:scaleX(0.85);transform-origin:0 0;">100</div>
<div class="t" style="top:417.00px;color:#707070;left:278.70px;transform:scaleX(0.85);transform-origin:0 0;-webkit-text-stroke-width:0.1px;">Package:</div>
<div class="t" style="top:417.00px;color:#222;left:350.00px;transform:scaleX(0.85);transform-origin:0 0;">1</div>
<div class="t" style="top:306.00px;color:#111;font-weight:bold;text-decoration:underline;text-underline-offset:0px;left:450.20px;transform:scaleX(0.85);transform-origin:0 0;">Retail:</div>
<div class="t" style="top:306.00px;color:#707070;left:490.70px;transform:scaleX(0.85);transform-origin:0 0;-webkit-text-stroke-width:0.1px;">Update On:</div>
<div class="t" style="top:306.00px;color:#222;left:539.20px;transform:scaleX(0.9);transform-origin:0 0;">10/18/2020</div>
<div class="t" style="top:318.00px;color:#707070;left:450.20px;transform:scaleX(0.85);transform-origin:0 0;-webkit-text-stroke-width:0.1px;">List:</div>
<div class="t" style="top:318.00px;color:#222;left:533.70px;transform:scaleX(0.85);transform-origin:0 0;">10.9900 EA</div>
<div class="t" style="top:330.00px;color:#707070;left:450.20px;transform:scaleX(0.85);transform-origin:0 0;-webkit-text-stroke-width:0.1px;">Retail:</div>
<div class="t" style="top:330.00px;color:#222;left:481.50px;transform:scaleX(0.85);transform-origin:0 0;">(D0)</div>
<div class="t" style="top:330.00px;color:#222;left:533.70px;transform:scaleX(0.85);transform-origin:0 0;">10.9900 EA</div>
<div class="t" style="top:356.00px;color:#111;font-weight:bold;text-decoration:underline;text-underline-offset:0px;left:450.20px;transform:scaleX(0.85);transform-origin:0 0;">Costs:</div>
<div class="t" style="top:356.00px;color:#707070;left:487.70px;transform:scaleX(0.85);transform-origin:0 0;-webkit-text-stroke-width:0.1px;">Update On:</div>
<div class="t" style="top:356.00px;color:#222;left:536.70px;transform:scaleX(0.9);transform-origin:0 0;">10/18/2020</div>
<div class="t" style="top:367.00px;color:#707070;left:450.20px;transform:scaleX(0.85);transform-origin:0 0;-webkit-text-stroke-width:0.1px;">Market:</div>
<div class="t" style="top:367.00px;color:#222;left:529.30px;transform:scaleX(0.85);transform-origin:0 0;">5.4700</div>
<div class="t" style="top:367.00px;color:#222;left:569.10px;transform:scaleX(0.85);transform-origin:0 0;">EA</div>
<div class="t" style="top:380.00px;color:#707070;left:450.20px;transform:scaleX(0.85);transform-origin:0 0;-webkit-text-stroke-width:0.1px;">Last:</div>
<div class="t" style="top:380.00px;color:#222;left:529.30px;transform:scaleX(0.85);transform-origin:0 0;">5.4700</div>
<div class="t" style="top:393.00px;color:#707070;left:450.20px;transform:scaleX(0.85);transform-origin:0 0;-webkit-text-stroke-width:0.1px;">Wavg:</div>
<div class="t" style="top:393.00px;color:#222;left:529.30px;transform:scaleX(0.85);transform-origin:0 0;">5.6447</div>
<div class="t" style="top:416.00px;color:#606060;left:450.20px;transform:scaleX(0.85);transform-origin:0 0;">Expected GM:</div>
<div class="t" style="top:349.00px;color:#777;text-decoration:underline;left:34.60px;transform:scaleX(0.85);transform-origin:0 0;">Ship Week</div>
<div class="t" style="top:349.00px;color:#777;text-decoration:underline;left:89.90px;transform:scaleX(0.85);transform-origin:0 0;">Qty</div>
<div class="t" style="top:361.00px;color:#222;left:17.70px;transform:scaleX(0.85);transform-origin:0 0;">1</div>
<div class="t" style="top:361.00px;color:#222;left:35.60px;transform:scaleX(0.9);transform-origin:0 0;">10/11/2020</div>
<div class="t" style="top:361.00px;color:#222;left:89.90px;transform:scaleX(0.85);transform-origin:0 0;">0</div>
<div class="t" style="top:361.00px;color:#707070;left:133.50px;transform:scaleX(0.85);transform-origin:0 0;-webkit-text-stroke-width:0.1px;">Full Pack:</div>
<div class="t" style="top:361.00px;color:#222;left:179.50px;transform:scaleX(0.85);transform-origin:0 0;">N</div>
<div class="t" style="top:373.00px;color:#707070;left:133.50px;transform:scaleX(0.85);transform-origin:0 0;-webkit-text-stroke-width:0.1px;">Pack Qty:</div>
<div class="t" style="top:373.00px;color:#222;left:179.50px;transform:scaleX(0.85);transform-origin:0 0;">1</div>
<div class="t" style="top:386.00px;color:#707070;left:133.50px;transform:scaleX(0.85);transform-origin:0 0;-webkit-text-stroke-width:0.1px;">Zoned:</div>
<div class="t" style="top:386.00px;color:#222;left:179.50px;transform:scaleX(0.85);transform-origin:0 0;">Z</div>
<div class="t" style="top:398.00px;color:#707070;left:133.50px;transform:scaleX(0.85);transform-origin:0 0;-webkit-text-stroke-width:0.1px;">Tiered:</div>
<div class="t" style="top:398.00px;color:#222;left:179.50px;transform:scaleX(0.85);transform-origin:0 0;">T</div>
<div class="t" style="top:361.00px;color:#707070;left:204.70px;transform:scaleX(0.85);transform-origin:0 0;-webkit-text-stroke-width:0.1px;">Core:</div>
<div class="t" style="top:361.00px;color:#222;left:246.10px;transform:scaleX(0.85);transform-origin:0 0;">Y</div>
<div class="t" style="top:373.00px;color:#707070;left:204.70px;transform:scaleX(0.85);transform-origin:0 0;-webkit-text-stroke-width:0.1px;">Terms:</div>
<div class="t" style="top:373.00px;color:#222;left:246.10px;transform:scaleX(0.85);transform-origin:0 0;">0</div>
<div class="t" style="top:385.00px;color:#707070;left:204.70px;transform:scaleX(0.85);transform-origin:0 0;-webkit-text-stroke-width:0.1px;">Program:</div>
<div class="t" style="top:385.00px;color:#222;left:246.10px;transform:scaleX(0.85);transform-origin:0 0;">BOM</div>
<div class="t" style="top:398.00px;color:#707070;left:204.70px;transform:scaleX(0.85);transform-origin:0 0;-webkit-text-stroke-width:0.1px;">Stocked:</div>
<div class="t" style="top:398.00px;color:#222;left:246.10px;transform:scaleX(0.85);transform-origin:0 0;">Y</div>
<div class="t" style="top:410.00px;color:#707070;left:204.70px;transform:scaleX(0.85);transform-origin:0 0;-webkit-text-stroke-width:0.1px;">Autoship:</div>
<div class="t" style="top:410.00px;color:#222;left:246.10px;transform:scaleX(0.85);transform-origin:0 0;">14</div>
<div class="t" style="top:417.00px;color:#858585;left:15.10px;transform:scaleX(0.85);transform-origin:0 0;">ADV Code:</div>
<div class="t" style="top:417.00px;color:#222;left:69.00px;transform:scaleX(0.85);transform-origin:0 0;">SH - Shown</div>
<div class="t" style="top:429.00px;color:#111;left:14.00px;transform:scaleX(0.837);transform-origin:0 0;">Future Promos: 002,011,017,401,461,008,047,057</div>
<div class="t" style="top:463.00px;color:#595959;font-size:7.5px;left:-65.00px;width:200px;text-align:center;transform:scaleX(0.97);transform-origin:50% 0;-webkit-text-stroke-width:0.1px;">F1</div>
<div class="t" style="top:471.00px;color:#595959;font-size:7.5px;left:-65.00px;width:200px;text-align:center;transform:scaleX(0.97);transform-origin:50% 0;-webkit-text-stroke-width:0.1px;">Next</div>
<div class="t" style="top:463.00px;color:#595959;font-size:7.5px;left:-20.50px;width:200px;text-align:center;transform:scaleX(0.97);transform-origin:50% 0;-webkit-text-stroke-width:0.1px;">F2</div>
<div class="t" style="top:471.00px;color:#595959;font-size:7.5px;left:-20.50px;width:200px;text-align:center;transform:scaleX(0.97);transform-origin:50% 0;-webkit-text-stroke-width:0.1px;">Import</div>
<div class="t" style="top:463.00px;color:#e6e6e6;font-size:7.5px;left:23.60px;width:200px;text-align:center;transform:scaleX(0.97);transform-origin:50% 0;-webkit-text-stroke-width:0.1px;">F3</div>
<div class="t" style="top:471.00px;color:#e6e6e6;font-size:7.5px;left:23.60px;width:200px;text-align:center;transform:scaleX(0.97);transform-origin:50% 0;-webkit-text-stroke-width:0.1px;">Style</div>
<div class="t" style="top:463.00px;color:#595959;font-size:7.5px;left:67.60px;width:200px;text-align:center;transform:scaleX(0.97);transform-origin:50% 0;-webkit-text-stroke-width:0.1px;">F4</div>
<div class="t" style="top:458.00px;color:#595959;font-size:7.5px;left:134.00px;width:200px;text-align:center;transform:scaleX(0.97);transform-origin:50% 0;-webkit-text-stroke-width:0.1px;">F5</div>
<div class="t" style="top:467.00px;color:#595959;font-size:7.5px;left:134.00px;width:200px;text-align:center;transform:scaleX(0.97);transform-origin:50% 0;-webkit-text-stroke-width:0.1px;">Add to</div>
<div class="t" style="top:475.00px;color:#595959;font-size:7.5px;left:134.00px;width:200px;text-align:center;transform:scaleX(0.97);transform-origin:50% 0;-webkit-text-stroke-width:0.1px;">Inventory</div>
<div class="t" style="top:463.00px;color:#595959;font-size:7.5px;left:178.60px;width:200px;text-align:center;transform:scaleX(0.97);transform-origin:50% 0;-webkit-text-stroke-width:0.1px;">F6</div>
<div class="t" style="top:463.00px;color:#595959;font-size:7.5px;left:222.40px;width:200px;text-align:center;transform:scaleX(0.97);transform-origin:50% 0;-webkit-text-stroke-width:0.1px;">F7</div>
<div class="t" style="top:463.00px;color:#595959;font-size:7.5px;left:266.60px;width:200px;text-align:center;transform:scaleX(0.97);transform-origin:50% 0;-webkit-text-stroke-width:0.1px;">F8</div>
<div class="t" style="top:463.00px;color:#e6e6e6;font-size:7.5px;left:333.00px;width:200px;text-align:center;transform:scaleX(0.97);transform-origin:50% 0;-webkit-text-stroke-width:0.1px;">F9</div>
<div class="t" style="top:471.00px;color:#e6e6e6;font-size:7.5px;left:333.00px;width:200px;text-align:center;transform:scaleX(0.97);transform-origin:50% 0;-webkit-text-stroke-width:0.1px;">Cancel</div>
<div class="t" style="top:463.00px;color:#e6e6e6;font-size:7.5px;left:377.50px;width:200px;text-align:center;transform:scaleX(0.97);transform-origin:50% 0;-webkit-text-stroke-width:0.1px;">F10</div>
<div class="t" style="top:471.00px;color:#e6e6e6;font-size:7.5px;left:377.50px;width:200px;text-align:center;transform:scaleX(0.97);transform-origin:50% 0;-webkit-text-stroke-width:0.1px;">Exit</div>
<div class="t" style="top:463.00px;color:#595959;font-size:7.5px;left:421.50px;width:200px;text-align:center;transform:scaleX(0.97);transform-origin:50% 0;-webkit-text-stroke-width:0.1px;">F11</div>
<div class="t" style="top:463.00px;color:#dcecf8;font-size:7.5px;left:465.30px;width:200px;text-align:center;transform:scaleX(0.97);transform-origin:50% 0;-webkit-text-stroke-width:0.1px;">F12</div>
<div class="t" style="top:471.00px;color:#dcecf8;font-size:7.5px;left:465.30px;width:200px;text-align:center;transform:scaleX(0.97);transform-origin:50% 0;-webkit-text-stroke-width:0.1px;">Process</div>
</div>
<svg class="b" style="left:547px;top:475px" width="14" height="20" viewBox="0 0 14 20"><path d="M1 1 L1 14.5 L4.2 11.6 L6.8 17.2 L8.9 16.3 L6.4 10.9 L10.4 10.6 Z" fill="#fff" stroke="#111" stroke-width="1" stroke-linejoin="round"/></svg>
</body></html>
